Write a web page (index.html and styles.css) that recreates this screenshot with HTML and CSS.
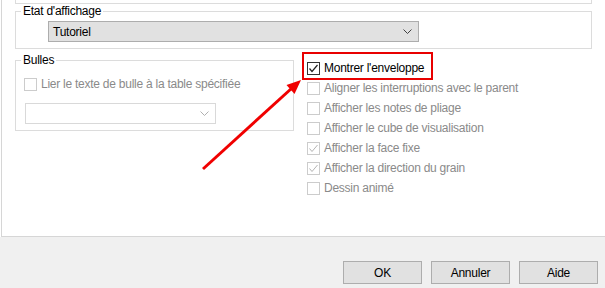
FILE: index.html
```html
<!DOCTYPE html>
<html lang="fr">
<head>
    <meta charset="UTF-8">
    <title>Options du document</title>
    <link rel="stylesheet" href="styles.css">
</head>
<body>
    <div class="panel">
        <div class="stub"></div>

        <fieldset class="group etat">
            <legend>Etat d'affichage</legend>
            <div class="combo combo-main">
                <span>Tutoriel</span>
                <svg width="9" height="5" viewBox="0 0 9 5"><polyline points="0.5,0.5 4.5,4.5 8.5,0.5" fill="none" stroke="#404040" stroke-width="1"/></svg>
            </div>
        </fieldset>

        <div class="row">
            <fieldset class="group bulles">
                <legend>Bulles</legend>
                <div class="check disabled"><span class="box"></span>Lier le texte de bulle à la table spécifiée</div>
                <div class="combo combo-empty">
                    <span></span>
                    <svg width="9" height="5" viewBox="0 0 9 5"><polyline points="0.5,0.5 4.5,4.5 8.5,0.5" fill="none" stroke="#b0b0b0" stroke-width="1"/></svg>
                </div>
            </fieldset>

            <ul class="options">
                <li class="check highlight"><span class="box"><svg width="11" height="11" viewBox="0 0 11 11"><polyline points="1.5,5.5 4,8.5 9.5,2" fill="none" stroke="#222" stroke-width="1.2"/></svg></span>Montrer l'enveloppe</li>
                <li class="check disabled"><span class="box"></span>Aligner les interruptions avec le parent</li>
                <li class="check disabled"><span class="box"></span>Afficher les notes de pliage</li>
                <li class="check disabled"><span class="box"></span>Afficher le cube de visualisation</li>
                <li class="check disabled"><span class="box"><svg width="11" height="11" viewBox="0 0 11 11"><polyline points="1.5,5.5 4,8.5 9.5,2" fill="none" stroke="#b5b5b5" stroke-width="1"/></svg></span>Afficher la face fixe</li>
                <li class="check disabled"><span class="box"><svg width="11" height="11" viewBox="0 0 11 11"><polyline points="1.5,5.5 4,8.5 9.5,2" fill="none" stroke="#b5b5b5" stroke-width="1"/></svg></span>Afficher la direction du grain</li>
                <li class="check disabled"><span class="box"></span>Dessin animé</li>
            </ul>
        </div>

        <!-- annotation arrow -->
        <svg class="arrow" width="605" height="236" viewBox="0 0 605 236">
            <line x1="203" y1="169" x2="292" y2="88" stroke="#f00000" stroke-width="3"/>
            <polygon points="301,80 286.5,85 294.5,94" fill="#f00000"/>
        </svg>
    </div>

    <div class="footer">
        <button>OK</button>
        <button>Annuler</button>
        <button>Aide</button>
    </div>
</body>
</html>
```

FILE: styles.css
```css
body {
    font-family: "Liberation Sans", Arial, sans-serif;
    font-size: 12px;
    letter-spacing: -0.25px;
    color: #000;
    background-color: #fff;
    margin: 0;
    padding: 0;
}

.panel {
    position: relative;
    height: 236px;
    margin-left: 1px;
    border-left: 1px solid #d6d6d6;
    border-bottom: 1px solid #d6d6d6;
    background: #fff;
}

.stub {
    height: 3px;
    margin: 0 13px;
    border: 1px solid #dcdcdc;
    border-top: none;
}

.group {
    margin: 0 13px;
    padding: 0;
    border: 1px solid #dcdcdc;
    min-width: 0;
}

.group legend {
    margin-left: 5px;
    padding: 0 2px;
    line-height: 14px;
}

.etat {
    padding-bottom: 6px;
}

.combo {
    display: flex;
    align-items: center;
    justify-content: space-between;
    height: 21px;
    box-sizing: border-box;
    padding: 0 6px 0 4px;
}

.combo-main {
    width: 371px;
    margin: 3px 0 0 32px;
    background: #e1e1e1;
    border: 1px solid #adadad;
}

.row {
    display: flex;
    align-items: flex-start;
    margin-top: 4px;
}

.bulles {
    width: 279px;
    box-sizing: border-box;
    padding-bottom: 6px;
    flex: none;
}

.bulles .check {
    margin: 9px 0 0 8px;
    height: 16px;
}

.combo-empty {
    width: 191px;
    margin: 11px 0 0 9px;
    background: #fff;
    border: 1px solid #d9d9d9;
}

.options {
    list-style: none;
    margin: 5px 0 0 0;
    padding: 0;
}

.options li {
    height: 20px;
}

.check {
    display: flex;
    align-items: center;
    white-space: nowrap;
}

.box {
    width: 13px;
    height: 13px;
    box-sizing: border-box;
    border: 1px solid #333;
    background: #fff;
    margin-right: 4px;
    display: flex;
    align-items: center;
    justify-content: center;
    flex: none;
}

.check.disabled {
    color: #8a8a8a;
}

.check.disabled .box {
    border-color: #cccccc;
}

.highlight {
    position: relative;
}

.highlight::before {
    content: "";
    position: absolute;
    left: -5px;
    top: -6px;
    width: 131px;
    height: 28px;
    box-sizing: border-box;
    border: 2px solid #e80000;
}

.arrow {
    position: absolute;
    left: -2px;
    top: 0;
}

.footer {
    height: 51px;
    background: #f0f0f0;
    display: flex;
    justify-content: flex-end;
    align-items: flex-start;
    gap: 9px;
    padding: 24px 7px 0 0;
    box-sizing: border-box;
}

.footer button {
    width: 79px;
    height: 23px;
    font-family: inherit;
    font-size: 12px;
    letter-spacing: inherit;
    background: #e1e1e1;
    border: 1px solid #adadad;
    padding: 0;
    color: #000;
}
```
